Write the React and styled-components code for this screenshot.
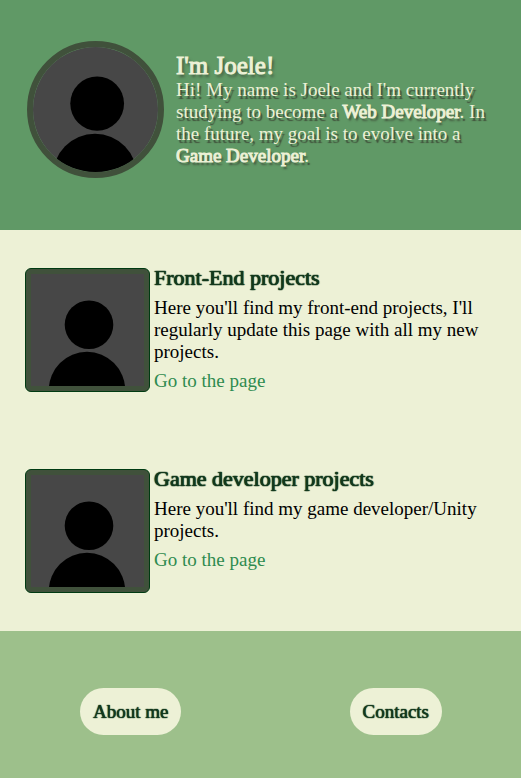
import React from "react";
import styled, { createGlobalStyle } from "styled-components";

const palette = {
  cream: "#edf1d6",
  sage: "#9dc08b",
  green: "#609966",
  moss: "#40513b",
  pine: "#12381c",
  link: "#2e8b4f",
};

const GlobalStyle = createGlobalStyle`
  * { box-sizing: border-box; }
  body {
    margin: 0;
    background: ${palette.sage};
    color: #000;
    font-family: "Liberation Serif", "Times New Roman", serif;
    font-size: 19px;
    line-height: 22px;
  }
  h1, h2, p { margin: 0; font-weight: 400; }
`;

const Hero = styled.header`
  display: flex;
  align-items: flex-start;
  gap: 12px;
  padding: 41px 27px 52px;
  background: ${palette.green};
  color: ${palette.cream};
`;

const HeroText = styled.div`
  padding-top: 11px;
`;

const HeroTitle = styled.h1`
  font-size: 25px;
  line-height: 27px;
  -webkit-text-stroke: 1px ${palette.cream};
  text-shadow: 2px 3px 3px ${palette.moss};
`;

const Intro = styled.p`
  text-shadow: 2px 3px 1px ${palette.moss};
`;

const Strong = styled.strong`
  font-weight: 400;
  -webkit-text-stroke: 1px ${palette.cream};
  text-shadow: 2px 3px 2px ${palette.moss};
`;

const Frame = styled.div`
  flex: none;
  width: 125px;
  height: 124px;
  padding: 5px;
  background: ${palette.moss};
  border: 1px solid #003b12;
  border-radius: 6px;
`;

const RoundFrame = styled(Frame)`
  width: 137px;
  height: 137px;
  padding: 0;
  background: none;
  border: 6px solid ${palette.moss};
  border-radius: 50%;
`;

const Silhouette = styled.svg`
  display: block;
  width: 100%;
  height: 100%;
  border-radius: ${(p) => (p.$round ? "50%" : "0")};
`;

const Projects = styled.main`
  display: grid;
  gap: 77px;
  padding: 38px 25px;
  background: ${palette.cream};
`;

const Project = styled.article`
  display: flex;
  align-items: flex-start;
  gap: 4px;
`;

const ProjectTitle = styled.h2`
  margin-top: -3px;
  font-size: 22px;
  line-height: 26px;
  color: ${palette.pine};
  text-shadow: 0 0 1px ${palette.pine}, 0 0 1px ${palette.pine}, 0 0 1px ${palette.pine};
`;

const ProjectText = styled.p`
  margin: 6px 0 7px;
`;

const ProjectLink = styled.a`
  color: ${palette.link};
  text-decoration: none;
`;

const Footer = styled.footer`
  display: flex;
  justify-content: space-between;
  padding: 57px 79px 43px 80px;
  background: ${palette.sage};
`;

const Pill = styled.button`
  padding: 12px 13px;
  border: 0;
  border-radius: 24px;
  background: ${palette.cream};
  color: ${palette.pine};
  font: inherit;
  line-height: 23px;
  cursor: pointer;
  text-shadow: 0 0 1px ${palette.pine}, 0 0 1px ${palette.pine};
`;

function Portrait({ round }) {
  const Shell = round ? RoundFrame : Frame;
  return (
    <Shell>
      <Silhouette
        $round={round}
        viewBox="0 0 113 112"
        preserveAspectRatio="none"
        role="img"
        aria-label="Profile silhouette"
      >
        <rect width="113" height="112" fill="#474747" />
        <circle cx="58" cy="50.7" r="24.3" />
        <circle cx="56" cy="116" r="38.2" />
      </Silhouette>
    </Shell>
  );
}

const projects = [
  {
    title: "Front-End projects",
    text: "Here you'll find my front-end projects, I'll regularly update this page with all my new projects.",
  },
  {
    title: "Game developer projects",
    text: "Here you'll find my game developer/Unity projects.",
  },
];

export default function App() {
  return (
    <>
      <GlobalStyle />
      <Hero>
        <Portrait round />
        <HeroText>
          <HeroTitle>I'm Joele!</HeroTitle>
          <Intro>
            Hi! My name is Joele and I'm currently studying to become a <Strong>Web Developer</Strong>. In
            the future, my goal is to evolve into a <Strong>Game Developer</Strong>.
          </Intro>
        </HeroText>
      </Hero>
      <Projects>
        {projects.map((project) => (
          <Project key={project.title}>
            <Portrait />
            <div>
              <ProjectTitle>{project.title}</ProjectTitle>
              <ProjectText>{project.text}</ProjectText>
              <ProjectLink href="#">Go to the page</ProjectLink>
            </div>
          </Project>
        ))}
      </Projects>
      <Footer>
        <Pill type="button">About me</Pill>
        <Pill type="button">Contacts</Pill>
      </Footer>
    </>
  );
}
